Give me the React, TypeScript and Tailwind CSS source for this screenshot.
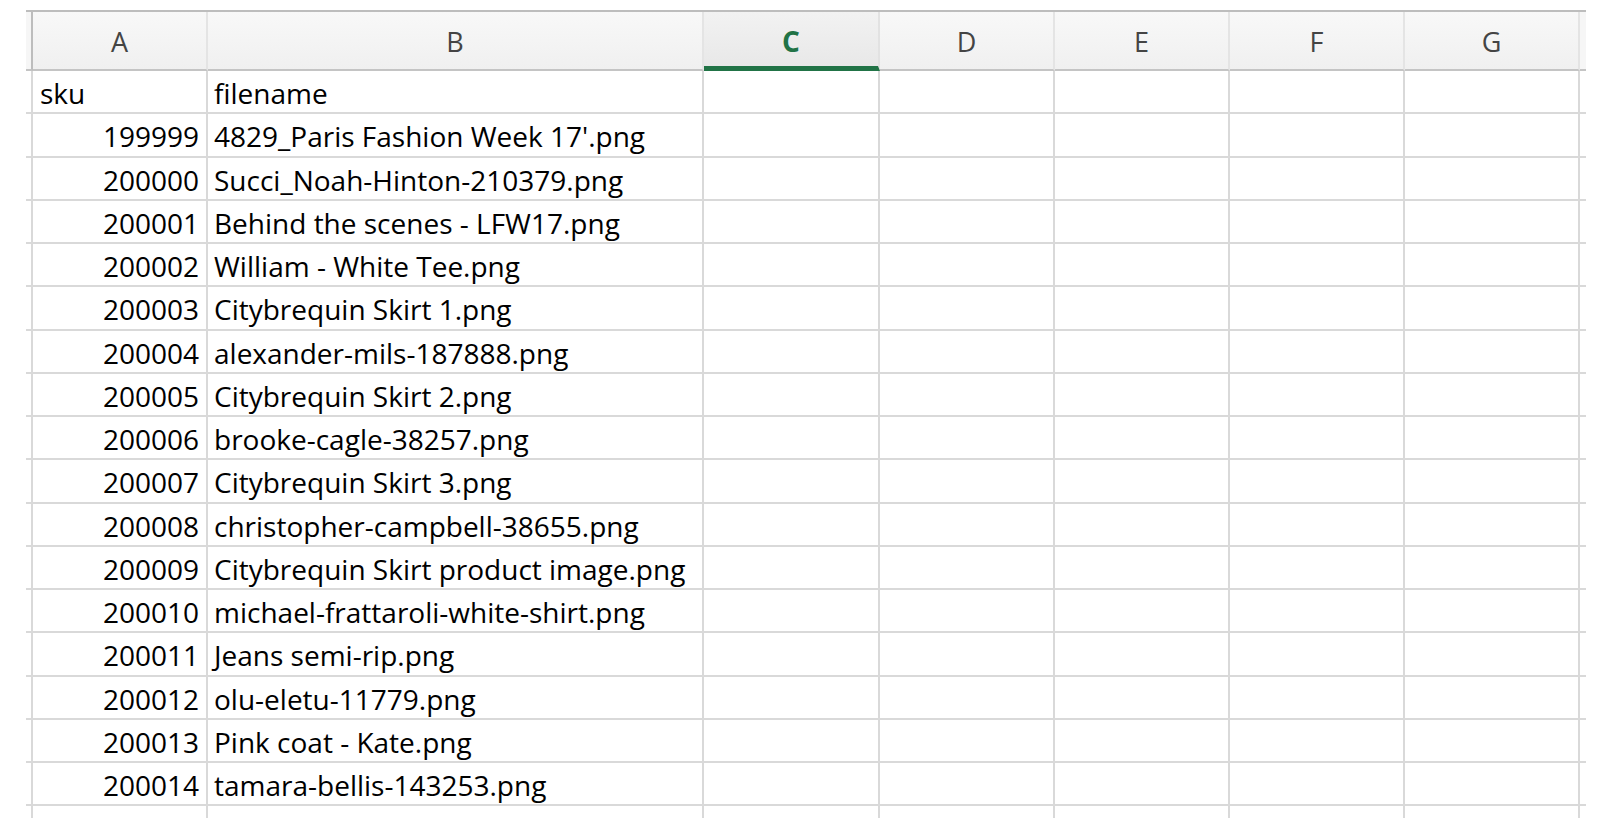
import React from "react";

const rows: [string, string][] = [
  ["199999", "4829_Paris Fashion Week 17'.png"],
  ["200000", "Succi_Noah-Hinton-210379.png"],
  ["200001", "Behind the scenes - LFW17.png"],
  ["200002", "William - White Tee.png"],
  ["200003", "Citybrequin Skirt 1.png"],
  ["200004", "alexander-mils-187888.png"],
  ["200005", "Citybrequin Skirt 2.png"],
  ["200006", "brooke-cagle-38257.png"],
  ["200007", "Citybrequin Skirt 3.png"],
  ["200008", "christopher-campbell-38655.png"],
  ["200009", "Citybrequin Skirt product image.png"],
  ["200010", "michael-frattaroli-white-shirt.png"],
  ["200011", "Jeans semi-rip.png"],
  ["200012", "olu-eletu-11779.png"],
  ["200013", "Pink coat - Kate.png"],
  ["200014", "tamara-bellis-143253.png"],
];

const cols = "grid grid-cols-[7px_175px_496px_176px_175px_175px_175px_175px_100px]";
const letters = ["A", "B", "C", "D", "E", "F", "G"];

const font = { fontFamily: '"Open Sans", "Noto Sans", sans-serif' };

function BodyRow({ a, b, right }: { a: string; b: string; right?: boolean }) {
  const cell = "h-[43.25px] border-r-2 border-b-2 border-[#d9d9d9]";
  return (
    <div className={cols}>
      <div className={cell} />
      <div className={`${cell} flex items-center px-[7px] pt-[3px] ${right ? "justify-end" : ""}`}>
        {a}
      </div>
      <div className={`${cell} flex items-center px-[6px] pt-[3px] whitespace-nowrap`}>{b}</div>
      {[0, 1, 2, 3, 4, 5].map((i) => (
        <div key={i} className={cell} />
      ))}
    </div>
  );
}

export default function App() {
  return (
    <div className="min-h-screen bg-white pl-[26px] pt-[10px]" style={font}>
      <div className="w-[1560px] h-[808px] overflow-hidden border-t-2 border-[#bdbdbd] text-[28px] text-black">
        <div className={cols}>
          <div className="h-[59px] border-r-2 border-b-2 border-r-[#bdbdbd] border-b-[#c4c4c4] bg-[#f6f6f6]" />
          {letters.map((l) =>
            l === "C" ? (
              <div
                key={l}
                className="h-[59px] flex items-center justify-center pt-[3px] border-r-2 border-r-[#e2e2e2] border-b-[5px] border-b-[#217346] bg-gradient-to-b from-[#f2f2f2] to-[#e8e8e8] text-[#217346] font-bold text-[28px]"
              >
                {l}
              </div>
            ) : (
              <div
                key={l}
                className="h-[59px] flex items-center justify-center pt-[4px] border-r-2 border-b-2 border-r-[#e4e4e4] border-b-[#c4c4c4] bg-gradient-to-b from-[#f8f8f8] to-[#f0f0f0] text-[#444] text-[27px]"
              >
                {l}
              </div>
            )
          )}
          <div className="h-[59px] border-b-2 border-b-[#c4c4c4] bg-[#f6f6f6]" />
        </div>
        <BodyRow a="sku" b="filename" />
        {rows.map(([a, b]) => (
          <BodyRow key={a} a={a} b={b} right />
        ))}
        <BodyRow a="" b="" />
      </div>
    </div>
  );
}
